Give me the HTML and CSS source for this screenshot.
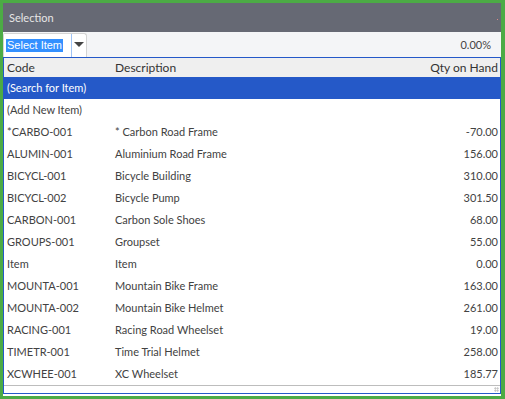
FILE: index.html
```html
<!DOCTYPE html>
<html>
<head>
<meta charset="utf-8">
<link rel="stylesheet" href="styles.css">
</head>
<body>
<div class="frame">
  <div class="header">
    <span class="title">Selection</span>
    <span class="dot"></span>
  </div>
  <div class="toolbar">
    <div class="combo">
      <div class="combo-input"><span class="sel">Select Item</span></div>
      <div class="combo-btn"><span class="arrow"></span></div>
    </div>
    <span class="pct">0.00%</span>
  </div>
  <div class="list">
    <div class="row head">
      <span>Code</span><span>Description</span><span class="num">Qty on Hand</span>
    </div>
    <div class="row active"><span class="span-all">(Search for Item)</span></div>
    <div class="row"><span class="span-all">(Add New Item)</span></div>
    <div class="row"><span>*CARBO-001</span><span>* Carbon Road Frame</span><span class="num">-70.00</span></div>
    <div class="row"><span>ALUMIN-001</span><span>Aluminium Road Frame</span><span class="num">156.00</span></div>
    <div class="row"><span>BICYCL-001</span><span>Bicycle Building</span><span class="num">310.00</span></div>
    <div class="row"><span>BICYCL-002</span><span>Bicycle Pump</span><span class="num">301.50</span></div>
    <div class="row"><span>CARBON-001</span><span>Carbon Sole Shoes</span><span class="num">68.00</span></div>
    <div class="row"><span>GROUPS-001</span><span>Groupset</span><span class="num">55.00</span></div>
    <div class="row"><span>Item</span><span>Item</span><span class="num">0.00</span></div>
    <div class="row"><span>MOUNTA-001</span><span>Mountain Bike Frame</span><span class="num">163.00</span></div>
    <div class="row"><span>MOUNTA-002</span><span>Mountain Bike Helmet</span><span class="num">261.00</span></div>
    <div class="row"><span>RACING-001</span><span>Racing Road Wheelset</span><span class="num">19.00</span></div>
    <div class="row"><span>TIMETR-001</span><span>Time Trial Helmet</span><span class="num">258.00</span></div>
    <div class="row last"><span>XCWHEE-001</span><span>XC Wheelset</span><span class="num">185.77</span></div>
    <div class="grip"></div>
  </div>
</div>
</body>
</html>
```
FILE: styles.css
```css
html, body {
  margin: 0;
  padding: 0;
}
body {
  background: #4cab45;
  padding: 3px 4px 3px 3px;
  font-family: Lato, "Liberation Sans", sans-serif;
  font-size: 11px;
}
.frame {
  background: #fff;
  height: 393px;
  display: flex;
  flex-direction: column;
}
.header {
  height: 29px;
  background: #666974;
  color: #e6e6e6;
  display: flex;
  align-items: center;
  padding-left: 6px;
  font-size: 11px;
}
.title {
  flex: 1;
}
.dot {
  width: 1px;
  height: 1px;
  background: #d88;
  margin-right: 3px;
  margin-top: 3px;
}
.toolbar {
  height: 25px;
  background: #f4f5f7;
  display: flex;
  align-items: flex-end;
  justify-content: space-between;
}
.combo {
  display: flex;
  height: 24px;
  width: 84px;
  box-sizing: border-box;
  background: #fff;
  border: 1px solid #d4d4d4;
  border-bottom: none;
  border-radius: 2px 3px 0 0;
}
.combo-input {
  width: 65px;
  border-right: 1px solid #9fc3f5;
  display: flex;
  align-items: center;
  padding-left: 2px;
}
.sel {
  background: #3390ff;
  color: #fff;
  font-family: "Liberation Sans", Arial, sans-serif;
  font-size: 11px;
  line-height: 13px;
  padding: 0 1px;
}
.combo-btn {
  flex: 1;
  display: flex;
  align-items: center;
  justify-content: center;
}
.arrow {
  width: 0;
  height: 0;
  border-left: 5px solid transparent;
  border-right: 5px solid transparent;
  border-top: 5px solid #444;
  margin-top: -2px;
}
.pct {
  color: #444;
  margin-right: 10px;
  align-self: center;
}
.list {
  border: 1px solid #2459c9;
  height: 337px;
  box-sizing: border-box;
  position: relative;
}
.row {
  display: grid;
  grid-template-columns: 108px 1fr 120px;
  height: 22px;
  box-sizing: border-box;
  align-items: center;
  padding: 0 2px 1px 3px;
  color: #424242;
}
.row .num {
  text-align: right;
}
.row .span-all {
  grid-column: 1 / 4;
}
.row.head {
  height: 19px;
  padding-bottom: 0;
  background: #efefef;
  color: #333;
  font-size: 12px;
}
.row.active {
  background: #2559c8;
  color: #fff;
}
.row.last {
  height: 23px;
  border-bottom: 1px solid #bdbdbd;
}
.grip {
  position: absolute;
  right: 1px;
  bottom: 1px;
  width: 5px;
  height: 5px;
  background-image: radial-gradient(circle, #bbb 0.8px, transparent 1px);
  background-size: 2.5px 2.5px;
}
```
